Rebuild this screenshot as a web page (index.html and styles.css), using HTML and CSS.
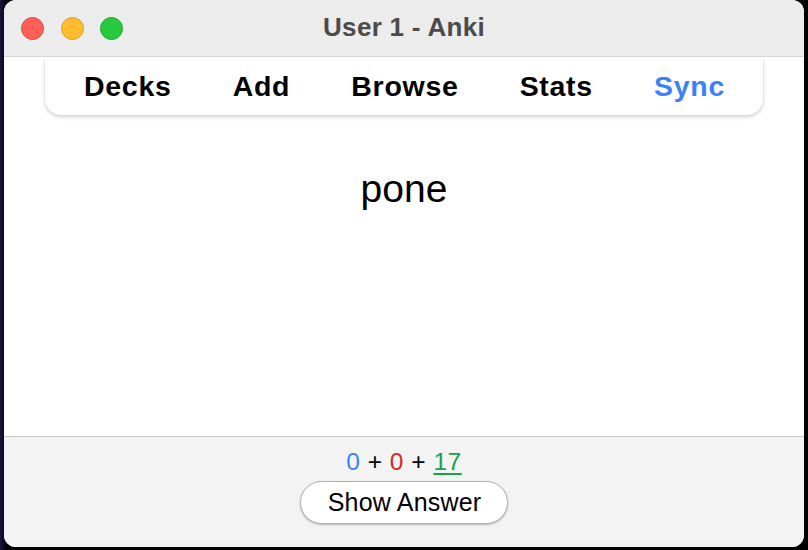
FILE: index.html
```html
<!DOCTYPE html>
<html>
<head>
<meta charset="utf-8">
<link rel="stylesheet" href="styles.css">
</head>
<body>
<div class="desk">
  <div class="window">
    <div class="titlebar">
      <div class="lights">
        <span class="light red"></span>
        <span class="light yellow"></span>
        <span class="light green"></span>
      </div>
      <div class="title">User 1 - Anki</div>
    </div>
    <div class="main">
      <nav class="toolbar">
        <span class="tb-item">Decks</span>
        <span class="tb-item">Add</span>
        <span class="tb-item">Browse</span>
        <span class="tb-item">Stats</span>
        <span class="tb-item sync">Sync</span>
      </nav>
      <div class="card">pone</div>
    </div>
    <div class="bottom">
      <div class="counts"><span class="new">0</span> + <span class="learn">0</span> + <span class="review">17</span></div>
      <button class="answer">Show Answer</button>
    </div>
  </div>
</div>
</body>
</html>
```
FILE: styles.css
```css
html, body {
  margin: 0;
  padding: 0;
  background: #000;
  height: 100%;
  overflow: hidden;
}
.desk {
  width: 808px;
  height: 550px;
  background: linear-gradient(90deg, #1a1440 0px, #0b0a1a 4px, #000 8px);
  display: flex;
  padding-left: 4px;
  box-sizing: border-box;
}
.window {
  width: 800px;
  height: 547px;
  border-radius: 12px;
  overflow: hidden;
  display: flex;
  flex-direction: column;
  background: #fff;
  font-family: "Liberation Sans", Arial, sans-serif;
}
.titlebar {
  height: 56px;
  flex: none;
  background: #ececec;
  border-bottom: 1px solid #d6d6d6;
  display: flex;
  align-items: center;
  position: relative;
}
.lights {
  display: flex;
  gap: 16.5px;
  padding-left: 17px;
  margin-top: 1px;
}
.light {
  width: 23px;
  height: 23px;
  border-radius: 50%;
  box-sizing: border-box;
}
.red { background: #ff5f57; border: 1px solid #e2463f; }
.yellow { background: #febc2e; border: 1px solid #e1a116; }
.green { background: #28c840; border: 1px solid #14ae2c; }
.title {
  position: absolute;
  left: 0;
  right: 0;
  text-align: center;
  font-weight: bold;
  font-size: 26px;
  color: #4b4b4b;
  letter-spacing: 0.3px;
  top: 12px;
}
.main {
  flex: 1;
  display: flex;
  flex-direction: column;
  align-items: stretch;
}
.toolbar {
  margin: 0 41px;
  height: 58px;
  background: #fff;
  border-radius: 0 0 16px 16px;
  box-shadow: 0 2px 4px rgba(0,0,0,0.18), 0 0 1px rgba(0,0,0,0.12);
  display: flex;
  justify-content: space-between;
  align-items: center;
  padding: 0 38px 0 39px;
}
.tb-item {
  font-weight: bold;
  font-size: 28.5px;
  color: #000;
  letter-spacing: 0.7px;
  padding-top: 1px;
}
.sync { color: #3b82f6; }
.card {
  text-align: center;
  font-size: 39px;
  color: #000;
  margin-top: 52px;
}
.bottom {
  height: 110px;
  flex: none;
  background: #f3f3f3;
  border-top: 1px solid #c4c4c4;
  display: flex;
  flex-direction: column;
  align-items: center;
}
.counts {
  font-size: 24.5px;
  margin-top: 11px;
  letter-spacing: 0.5px;
  color: #000;
}
.new { color: #3b82f6; }
.learn { color: #dc2626; }
.review { color: #16a34a; text-decoration: underline; text-underline-offset: 3px; }
.answer {
  margin-top: 5px;
  width: 208px;
  height: 43px;
  border-radius: 22px;
  background: #fff;
  border: 1px solid #b0b0b0;
  box-shadow: 0 1px 2px rgba(0,0,0,0.25);
  font-family: "Liberation Sans", Arial, sans-serif;
  font-size: 25px;
  color: #000;
  letter-spacing: 0.2px;
  padding: 0 0 0 1px;
}
```
